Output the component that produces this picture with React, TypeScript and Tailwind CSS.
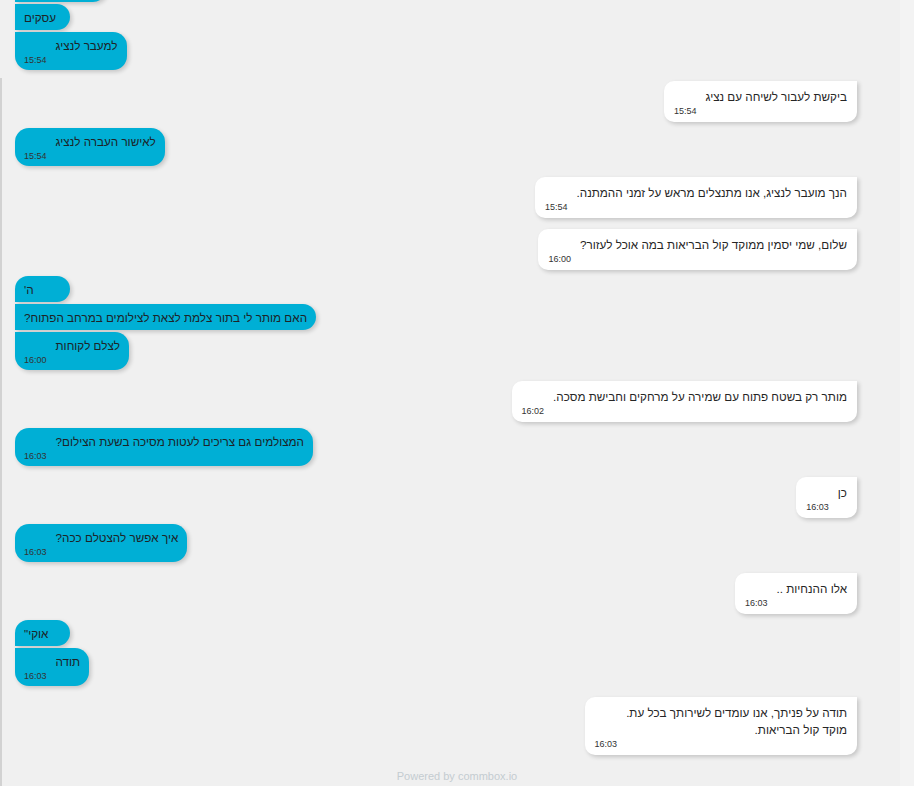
import React from "react"

type Msg = {
  from: "bot" | "me"
  lines: string[]
  time?: string
  cont?: boolean
}

// conversation, scrolled so the first bubble is cut off at the top
const MESSAGES: Msg[] = [
  { from: "me", lines: ["לקוחות פרטיים"] },
  { from: "me", lines: ["עסקים"], cont: true },
  { from: "me", lines: ["למעבר לנציג"], time: "15:54", cont: true },
  { from: "bot", lines: ["ביקשת לעבור לשיחה עם נציג"], time: "15:54" },
  { from: "me", lines: ["לאישור העברה לנציג"], time: "15:54" },
  { from: "bot", lines: ["הנך מועבר לנציג, אנו מתנצלים מראש על זמני ההמתנה."], time: "15:54" },
  { from: "bot", lines: ["שלום, שמי יסמין ממוקד קול הבריאות במה אוכל לעזור?"], time: "16:00" },
  { from: "me", lines: ["ה'"] },
  { from: "me", lines: ["האם מותר לי בתור צלמת לצאת לצילומים במרחב הפתוח?"], cont: true },
  { from: "me", lines: ["לצלם לקוחות"], time: "16:00", cont: true },
  { from: "bot", lines: ["מותר רק בשטח פתוח עם שמירה על מרחקים וחבישת מסכה."], time: "16:02" },
  { from: "me", lines: ["המצולמים גם צריכים לעטות מסיכה בשעת הצילום?"], time: "16:03" },
  { from: "bot", lines: ["כן"], time: "16:03" },
  { from: "me", lines: ["איך אפשר להצטלם ככה?"], time: "16:03" },
  { from: "bot", lines: ["אלו ההנחיות .."], time: "16:03" },
  { from: "me", lines: ["אוקי\""] },
  { from: "me", lines: ["תודה"], time: "16:03", cont: true },
  {
    from: "bot",
    lines: ["תודה על פניתך, אנו עומדים לשירותך בכל עת.", "מוקד קול הבריאות."],
    time: "16:03",
  },
]

function corners(msgs: Msg[], i: number) {
  const m = msgs[i]
  if (m.from === "bot") return "rounded-[10px] rounded-tr-none"
  const next = msgs[i + 1]
  const hasNext = next && next.from === "me" && next.cont
  if (m.cont && hasNext) return "rounded-r-[14px]"
  if (m.cont) return "rounded-r-[14px] rounded-bl-[14px]"
  if (hasNext) return "rounded-r-[14px] rounded-tl-[14px]"
  return "rounded-[14px]"
}

function Bubble({ msg, shape }: { msg: Msg; shape: string }) {
  const isBot = msg.from === "bot"
  const base = isBot
    ? "bg-white text-[#262626] px-[10px] pt-[7px] pb-[5px] gap-x-[9px]"
    : "bg-[#00afd5] text-[#1d2327] px-[9px] pt-[5px] pb-[4px] gap-x-[9px]"

  if (!msg.time) {
    return (
      <div
        className={`${base} ${shape} min-w-[55px] text-left text-[11.7px] leading-[17px] shadow-[2px_2px_4px_rgba(0,0,0,0.18)]`}
        dir="rtl"
      >
        {msg.lines.join(" ")}
      </div>
    )
  }

  return (
    <div
      className={`${base} ${shape} grid grid-cols-[auto_auto] shadow-[2px_2px_4px_rgba(0,0,0,0.18)]`}
      dir="ltr"
    >
      <div />
      <div dir="rtl" className="text-right text-[11.7px] leading-[17px]">
        {msg.lines.map((l, k) => (
          <div key={k}>{l}</div>
        ))}
      </div>
      <div className="text-[9px] leading-[12px] text-[#333]">{msg.time}</div>
    </div>
  )
}

export default function App() {
  return (
    <div className="relative flex h-[786px] w-full overflow-hidden bg-[#f0f0f0] font-['Liberation_Sans',Arial,sans-serif]">
      {/* thin left rule of the chat frame */}
      <div className="absolute left-0 top-[78px] bottom-0 w-[2px] bg-[#d2d2d2]" />

      <div className="flex flex-1 flex-col">
        <div className="flex flex-col pl-[15px] pr-[43px] -mt-[24px]">
          {MESSAGES.map((m, i) => {
            const prev = MESSAGES[i - 1]
            let mt = ""
            if (i > 0) {
              if (m.from === "bot") mt = "mt-[11px]"
              else if (m.cont) mt = "mt-[2px]"
              else if (prev && prev.from === "bot") mt = "mt-[6px]"
              else mt = "mt-[11px]"
            }
            return (
              <div
                key={i}
                className={`flex ${m.from === "bot" ? "justify-end" : "justify-start"} ${mt}`}
              >
                <Bubble msg={m} shape={corners(MESSAGES, i)} />
              </div>
            )
          })}
        </div>

        <div className="mt-[14px] pl-[14px] text-center text-[11px] leading-[14px] text-[#c4ccd0]">
          Powered by commbox.io
        </div>
      </div>

      {/* scrollbar track */}
      <div className="w-[14px] shrink-0 bg-[#f3f3f3]" />
    </div>
  )
}
